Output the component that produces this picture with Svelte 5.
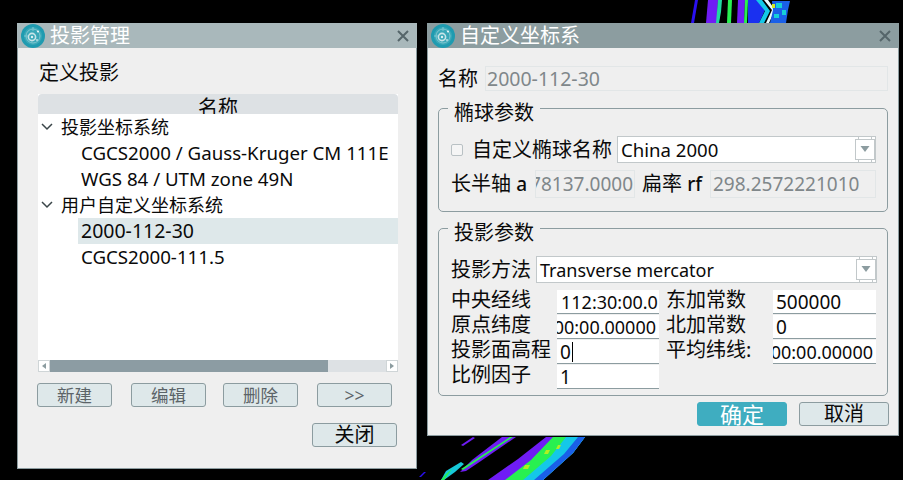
<script>
  const tree = [
    { label: '投影坐标系统', group: true },
    { label: 'CGCS2000 / Gauss-Kruger CM 111E' },
    { label: 'WGS 84 / UTM zone 49N' },
    { label: '用户自定义坐标系统', group: true },
    { label: '2000-112-30', selected: true },
    { label: 'CGCS2000-111.5' }
  ];
  const actions = ['新建', '编辑', '删除', '>>'];
  const fields = [
    { label: '中央经线', value: '112:30:00.0', tight: true, label2: '东加常数', value2: '500000' },
    { label: '原点纬度', value: '00:00:00.00000', clip: true, label2: '北加常数', value2: '0' },
    { label: '投影面高程', value: '0', caret: true, label2: '平均纬线:', value2: '00:00:00.00000', clip2: true },
    { label: '比例因子', value: '1' }
  ];
</script>

{#snippet logo()}
  <svg class="logo" viewBox="0 0 24 24" width="24" height="24" aria-hidden="true">
    <circle cx="12" cy="12" r="12" fill="#1f9bb0" />
    <circle cx="12" cy="12" r="9" fill="#3aa8b8" />
    <circle cx="12" cy="12" r="7" fill="none" stroke="#7fc6d0" stroke-width="1" />
    <circle cx="11" cy="13" r="3.6" fill="none" stroke="#c8e4e8" stroke-width="1.6" />
    <circle cx="11" cy="13" r="1.2" fill="#dff0f2" />
    <path d="M12 3v4M3 12h4" stroke="#7cc6d1" stroke-width="1" />
    <circle cx="17" cy="7.5" r="1.1" fill="#e4f3f5" />
    <circle cx="16" cy="16" r="1" fill="#b8dfe5" />
  </svg>
{/snippet}

{#snippet close()}
  <svg class="close" viewBox="0 0 12 12" width="12" height="12" aria-hidden="true">
    <path d="M1 1l10 10M11 1L1 11" stroke="#55656a" stroke-width="2" />
  </svg>
{/snippet}

{#snippet arrow()}
  <svg class="drop" viewBox="0 0 20 25" width="20" height="25" aria-hidden="true">
    <path d="M3.5 0v3M16.5 0v3M3.5 22v3M16.5 22v3" stroke="#c2c8ca" fill="none" />
    <rect x="0.5" y="2.5" width="19" height="20" fill="#fff" stroke="#c2c8ca" />
    <path d="M5.5 9h9L10 15z" fill="#8c9ca0" />
  </svg>
{/snippet}

<main class="desktop">
  <svg class="art" viewBox="0 0 903 480" width="903" height="480" aria-hidden="true">
    <path d="M695 0h3l-4 23h-3z" fill="#2a10f0" />
    <path d="M708 0h10l-1 23h-11z" fill="#6f1cf5" />
    <path d="M718 0h4l-1 12-2 11h-3z" fill="#20d8a0" />
    <path d="M728 0h4l-1 23h-4z" fill="#28f050" />
    <path d="M738 0h7l-1 23h-7z" fill="#6f1cf5" />
    <path d="M745 0h3l-1 23h-3z" fill="#28f050" />
    <path d="M748 0h9l8 10-6 13h-11z" fill="#1a30f0" />
    <path d="M756 0h6l8 11-6 12h-5l6-12z" fill="#14c8e8" />
    <path d="M764 0l8 10-6 13h3l6-13-7-10z" fill="#e8fbff" />
    <path d="M772 1h18l-2 9-2 13h-16l3-13z" fill="#1a60e8" />
    <path d="M776 3h6v5h-6zM782 10h4v5h-4zM774 14h5v4h-5z" fill="#16d0d8" />
    <path d="M772 4h3v4h-3z" fill="#d8e820" />

    <path d="M473 437l2 1-12 8-2-1z" fill="#6f1cf5" />
    <path d="M502 437h14l-38 26-12 8-6 1 12-12z" fill="#6f1cf5" />
    <path d="M510 437h3l-50 33-2-1z" fill="#28f050" />
    <path d="M461 462l3 2-9 8-11 8h-3l5-9z" fill="#16c8d8" />
    <path d="M446 474l6-5-8 11h-3z" fill="#28f050" />
    <path d="M424 472h2l-5 5h-2z" fill="#2a10f0" />
    <path d="M546 437h39l-12 16-30 27h-55l30-21z" fill="#6f1cf5" />
    <path d="M553 437h32l-12 16-30 27h-38l26-20z" fill="#28f050" />
    <path d="M566 437h19l-12 16-30 27h-20l28-24z" fill="#14c8e8" />
    <path d="M578 437h7l-12 16-30 27h-9l30-26z" fill="#1a60e8" />
    <path d="M525 465h5l-2 4h-5zM546 450h4l-2 4h-4zM558 445h3l-2 4h-3z" fill="#b0f020" />
  </svg>

  <section class="window manage">
    <header class="title light">{@render logo()}<h1>投影管理</h1>{@render close()}</header>
    <div class="manage-body">
      <p class="heading">定义投影</p>
      <div class="tree">
        <div class="tree-head"><span>名称</span></div>
        <ul class="rows">
          {#each tree as row}
            <li class="row" class:group={row.group} class:selected={row.selected}>
              {#if row.group}
                <svg viewBox="0 0 12 8" width="12" height="8" aria-hidden="true"><path d="M1 1l5 5 5-5" fill="none" stroke="#3a4548" stroke-width="1.5" /></svg>
              {/if}
              <span>{row.label}</span>
            </li>
          {/each}
        </ul>
        <div class="scrollbar">
          <span class="step"><svg viewBox="0 0 4 6" width="4" height="6" aria-hidden="true"><path d="M4 0v6L0 3z" fill="#8c9ca0" /></svg></span>
          <span class="track"><span class="thumb"></span></span>
          <span class="step"><svg viewBox="0 0 4 6" width="4" height="6" aria-hidden="true"><path d="M0 0v6l4-3z" fill="#8c9ca0" /></svg></span>
        </div>
      </div>
      <div class="actions">
        {#each actions as action}
          <button class="btn muted">{action}</button>
        {/each}
      </div>
      <div class="closing"><button class="btn shut">关闭</button></div>
    </div>
  </section>

  <section class="window custom">
    <header class="title dark">{@render logo()}<h1>自定义坐标系</h1>{@render close()}</header>
    <div class="custom-body">
      <div class="name-row">
        <label for="crs-name">名称</label>
        <input id="crs-name" class="ro name" value="2000-112-30" readonly />
      </div>

      <fieldset class="ellipsoid">
        <legend>椭球参数</legend>
        <div class="combo-row">
          <span class="check"></span>
          <span class="check-label">自定义椭球名称</span>
          <div class="combo c1"><span>China 2000</span>{@render arrow()}</div>
        </div>
        <div class="axis-row">
          <span class="lbl-a">长半轴 <b>a</b></span>
          <div class="ro box semi"><span>6378137.0000</span></div>
          <span class="lbl-rf">扁率 <b>rf</b></span>
          <div class="ro box flat"><span>298.2572221010</span></div>
        </div>
      </fieldset>

      <fieldset class="projection">
        <legend>投影参数</legend>
        <div class="method-row">
          <span>投影方法</span>
          <div class="combo c2"><span>Transverse mercator</span>{@render arrow()}</div>
        </div>
        <div class="fields">
          {#each fields as f}
            <span class="f-label">{f.label}</span>
            <div class="field" class:clip={f.clip} class:tight={f.tight}><span>{f.value}</span>{#if f.caret}<i class="caret"></i>{/if}</div>
            {#if f.label2}
              <span class="f-label second">{f.label2}</span>
              <div class="field narrow" class:clip={f.clip2}><span>{f.value2}</span></div>
            {/if}
          {/each}
        </div>
      </fieldset>

      <div class="confirm">
        <button class="btn primary">确定</button>
        <button class="btn cancel">取消</button>
      </div>
    </div>
  </section>
</main>

<style>
  :global(body) {
    margin: 0;
    background: #000;
  }
  .desktop {
    position: relative;
    width: 903px;
    height: 480px;
    overflow: hidden;
    background: #000;
    color: #0a0a0a;
    font-family: "Noto Sans", "Noto Sans CJK SC", sans-serif;
    font-size: 18px;
    line-height: 26px;
  }
  .art {
    position: absolute;
    left: 0;
    top: 0;
  }
  .window {
    position: absolute;
    top: 23px;
    box-sizing: border-box;
    background: #efefef;
    border: 1px solid #8c9ca0;
    border-top: 0;
    display: flex;
    flex-direction: column;
  }
  .manage {
    left: 17px;
    width: 400px;
    height: 446px;
  }
  .custom {
    left: 427px;
    width: 472px;
    height: 413px;
  }
  .title {
    height: 25px;
    flex: none;
    display: flex;
    align-items: center;
    padding: 0 6px 0 4px;
    margin: 0 -1px;
  }
  .title.light { background: #a9b8bb; }
  .title.dark { background: #8c9da0; }
  .title h1 {
    flex: 1;
    margin: 0 0 0 5px;
    font-size: 20px;
    font-weight: 400;
    color: #fff;
    line-height: 25px;
  }
  .logo { flex: none; }
  .close { margin-right: 2px; }

  .manage-body {
    padding: 0 19px 0 20px;
    display: flex;
    flex-direction: column;
  }
  .heading {
    margin: 12px 0 8px 1px;
    font-size: 20px;
    line-height: 26px;
  }
  .tree {
    background: #fff;
    width: 360px;
  }
  .tree-head {
    height: 20px;
    overflow: hidden;
    background: #dde1e4;
    border-radius: 4px 4px 0 0;
    text-align: center;
    font-size: 20px;
    line-height: 26px;
  }
  .tree-head span {
    display: block;
    margin-top: 1px;
  }
  .rows {
    list-style: none;
    margin: 0;
    padding: 0;
    height: 246px;
  }
  .row {
    height: 26px;
    padding-left: 43px;
    white-space: nowrap;
    overflow: hidden;
    font-size: 18.7px;
    line-height: 26px;
  }
  .row.group {
    padding-left: 3px;
    display: flex;
    align-items: center;
    gap: 8px;
    font-size: 18px;
  }
  .row.selected {
    margin-left: 40px;
    padding-left: 3px;
    background: #dee8ea;
    font-size: 19.5px;
  }
  .scrollbar {
    display: flex;
    height: 12px;
  }
  .step {
    box-sizing: border-box;
    width: 12px;
    border: 1px solid #cfd5d7;
    background: #fff;
    display: flex;
    align-items: center;
    justify-content: center;
  }
  .track {
    flex: 1;
    background: #dde1e4;
    display: flex;
  }
  .thumb {
    width: 278px;
    background: #8c9ca3;
  }
  .actions {
    margin: 11px 0 0 -1px;
    display: flex;
  }
  .actions .btn { width: 75px; }
  .actions .btn:nth-child(2) { margin-left: 19px; }
  .actions .btn:nth-child(3) { margin-left: 17px; }
  .actions .btn:nth-child(4) { margin-left: 19px; }
  .btn {
    box-sizing: border-box;
    height: 24px;
    padding: 0;
    border: 1px solid #8c9ca0;
    border-radius: 3px;
    background: #dee8ea;
    font-family: inherit;
    font-size: 20px;
    line-height: 20px;
    color: #0a0a0a;
  }
  .btn.muted {
    color: #5c6468;
    font-size: 17.5px;
  }
  .closing {
    margin-top: 16px;
    width: 360px;
    display: flex;
    justify-content: flex-end;
    padding-right: 1px;
    box-sizing: border-box;
  }
  .shut { width: 85px; }

  .custom-body {
    padding: 0 10px 0 10px;
    display: flex;
    flex-direction: column;
  }
  .name-row {
    margin-top: 18px;
    height: 25px;
    display: flex;
    align-items: center;
    gap: 7px;
  }
  .name-row label { font-size: 20px; }
  .ro {
    box-sizing: border-box;
    background: #efefef;
    border: 1px solid #e2e6e7;
    color: #80878a;
    font-family: inherit;
    font-size: 19px;
    outline: none;
  }
  .name {
    width: 403px;
    height: 25px;
    padding: 0 1px;
    font-size: 19.5px;
  }
  fieldset {
    box-sizing: border-box;
    margin: 0;
    border: 1px solid #8c9ca0;
    border-radius: 5px;
    width: 450px;
    padding: 0 11px 0 12px;
    min-inline-size: 0;
  }
  legend {
    margin-left: -3px;
    padding: 10px 6px 0;
    font-size: 20px;
    line-height: 26px;
  }
  .ellipsoid {
    margin-top: -1px;
    height: 122px;
  }
  .projection {
    margin-top: -2px;
    height: 186px;
  }
  .combo-row {
    margin-top: 10px;
    height: 27px;
    display: flex;
    align-items: center;
  }
  .check {
    box-sizing: border-box;
    width: 12px;
    height: 12px;
    border: 1px solid #b9c1c4;
    border-radius: 2px;
    background: #f5f5f5;
    flex: none;
  }
  .check-label {
    margin: 0 5px 0 9px;
    font-size: 20px;
    white-space: nowrap;
  }
  .combo {
    box-sizing: border-box;
    height: 27px;
    background: #fff;
    border: 1px solid #c2c8ca;
    display: flex;
    align-items: center;
    justify-content: space-between;
    padding-left: 3px;
    white-space: nowrap;
    font-size: 18.6px;
  }
  .c1 { width: 260px; }
  .c2 { width: 341px; }
  .drop { flex: none; }
  .axis-row {
    margin-top: 7px;
    height: 28px;
    display: flex;
    align-items: center;
  }
  .axis-row b { font-weight: 500; font-size: 19px; }
  .lbl-a {
    width: 84px;
    font-size: 20px;
    white-space: nowrap;
    flex: none;
  }
  .lbl-rf {
    width: 68px;
    margin-left: 7px;
    font-size: 20px;
    white-space: nowrap;
    flex: none;
  }
  .box {
    height: 28px;
    display: flex;
    align-items: center;
    overflow: hidden;
    white-space: nowrap;
    flex: none;
  }
  .semi {
    width: 100px;
    justify-content: flex-end;
    padding-right: 1px;
  }
  .flat {
    width: 166px;
    padding-left: 2px;
  }
  .method-row {
    margin-top: 10px;
    height: 27px;
    display: flex;
    align-items: center;
    justify-content: space-between;
    width: 426px;
    font-size: 20px;
  }
  .method-row .combo { font-size: 18px; }
  .fields {
    margin-top: 7px;
    display: grid;
    grid-template-columns: 106px 102px 114px 103px;
    grid-auto-rows: 23px;
    row-gap: 2px;
    align-items: start;
  }
  .f-label {
    font-size: 20px;
    line-height: 20px;
    white-space: nowrap;
  }
  .second { padding-left: 7px; }
  .field {
    box-sizing: border-box;
    height: 24px;
    background: #fff;
    border-bottom: 1px solid #8c9ca0;
    padding-left: 3px;
    display: flex;
    align-items: center;
    overflow: hidden;
    white-space: nowrap;
    line-height: 22px;
    font-size: 19px;
  }
  .field.tight { font-size: 18px; padding-left: 4px; }
  .field.clip {
    padding-left: 0;
    justify-content: flex-end;
    padding-right: 3px;
    font-size: 18px;
  }
  .caret {
    width: 1px;
    height: 20px;
    background: #000;
    margin-left: 1px;
  }
  .confirm {
    margin-top: 6px;
    width: 451px;
    display: flex;
    justify-content: flex-end;
    gap: 12px;
  }
  .confirm .btn {
    width: 90px;
  }
  .primary {
    background: #3fadc0;
    border-color: #3fadc0;
    color: #fff;
    font-size: 22px;
  }
</style>
